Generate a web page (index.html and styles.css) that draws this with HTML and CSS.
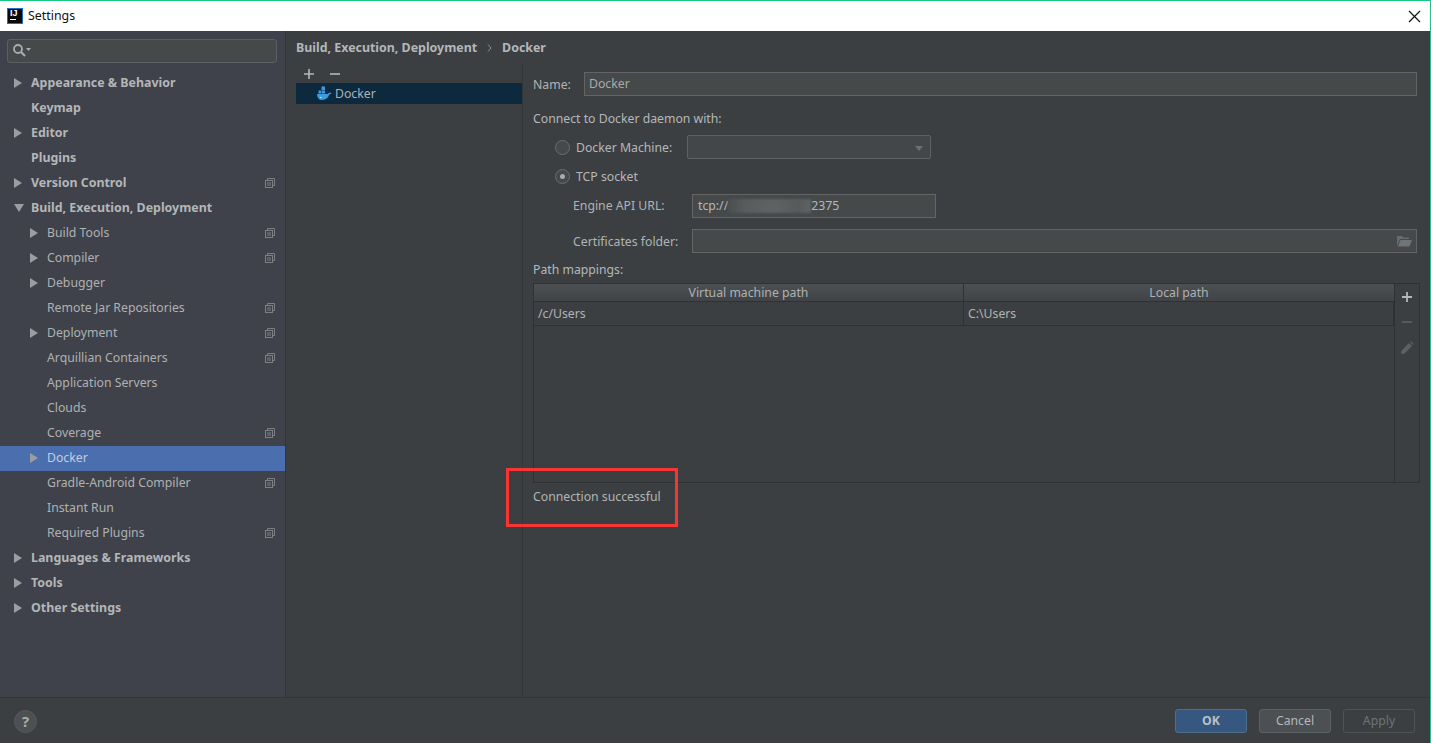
FILE: index.html
```html
<!DOCTYPE html>
<html lang="en">
<head>
<meta charset="utf-8">
<title>Settings</title>
<link rel="stylesheet" href="styles.css">
</head>
<body>
<div class="window">
  <header class="titlebar">
    <div class="app-logo"><span class="app-logo-text">IJ</span><span class="app-logo-bar"></span></div>
    <span class="title">Settings</span>
    <svg class="close" width="13" height="13" viewBox="0 0 13 13"><path d="M1 1l11 11M12 1L1 12" stroke="#111" stroke-width="1.2" fill="none"/></svg>
  </header>
  <div class="body">
    <aside class="sidebar">
      <div class="search">
        <svg width="20" height="15" viewBox="0 0 20 15"><circle cx="6" cy="6" r="4" fill="none" stroke="#a8adb0" stroke-width="1.8"/><path d="M9 9l4 4" stroke="#a8adb0" stroke-width="2.2"/><path d="M14 5h5l-2.500 3z" fill="#a8adb0"/></svg>
      </div>
      <nav class="tree">
        <div class="row bold"><i class="arrow"></i><span>Appearance &amp; Behavior</span></div>
        <div class="row bold"><i class="noarrow"></i><span>Keymap</span></div>
        <div class="row bold"><i class="arrow"></i><span>Editor</span></div>
        <div class="row bold"><i class="noarrow"></i><span>Plugins</span></div>
        <div class="row bold"><i class="arrow"></i><span>Version Control</span><svg class="copy" viewBox="0 0 10 10"><use href="#copy"/></svg></div>
        <div class="row bold"><i class="arrow down"></i><span>Build, Execution, Deployment</span></div>
        <div class="row sub"><i class="arrow"></i><span>Build Tools</span><svg class="copy" viewBox="0 0 10 10"><use href="#copy"/></svg></div>
        <div class="row sub"><i class="arrow"></i><span>Compiler</span><svg class="copy" viewBox="0 0 10 10"><use href="#copy"/></svg></div>
        <div class="row sub"><i class="arrow"></i><span>Debugger</span></div>
        <div class="row sub"><i class="noarrow"></i><span>Remote Jar Repositories</span><svg class="copy" viewBox="0 0 10 10"><use href="#copy"/></svg></div>
        <div class="row sub"><i class="arrow"></i><span>Deployment</span><svg class="copy" viewBox="0 0 10 10"><use href="#copy"/></svg></div>
        <div class="row sub"><i class="noarrow"></i><span>Arquillian Containers</span><svg class="copy" viewBox="0 0 10 10"><use href="#copy"/></svg></div>
        <div class="row sub"><i class="noarrow"></i><span>Application Servers</span></div>
        <div class="row sub"><i class="noarrow"></i><span>Clouds</span></div>
        <div class="row sub"><i class="noarrow"></i><span>Coverage</span><svg class="copy" viewBox="0 0 10 10"><use href="#copy"/></svg></div>
        <div class="row sub selected"><i class="arrow"></i><span>Docker</span></div>
        <div class="row sub"><i class="noarrow"></i><span>Gradle-Android Compiler</span><svg class="copy" viewBox="0 0 10 10"><use href="#copy"/></svg></div>
        <div class="row sub"><i class="noarrow"></i><span>Instant Run</span></div>
        <div class="row sub"><i class="noarrow"></i><span>Required Plugins</span><svg class="copy" viewBox="0 0 10 10"><use href="#copy"/></svg></div>
        <div class="row bold"><i class="arrow"></i><span>Languages &amp; Frameworks</span></div>
        <div class="row bold"><i class="arrow"></i><span>Tools</span></div>
        <div class="row bold"><i class="arrow"></i><span>Other Settings</span></div>
      </nav>
    </aside>
    <main class="content">
      <div class="crumbs"><span>Build, Execution, Deployment</span><svg class="crumb-sep" width="5" height="8" viewBox="0 0 5 8"><path d="M1 .5L4 4 1 7.500" fill="none" stroke="#8f9396"/></svg><span>Docker</span></div>
      <div class="columns">
        <section class="servers">
          <div class="servers-tools">
            <svg width="12" height="12" viewBox="0 0 12 12"><path d="M6 1v10M1 6h10" stroke="#b4b8ba" stroke-width="1.6"/></svg>
            <svg width="12" height="12" viewBox="0 0 12 12"><path d="M1 6h10" stroke="#b4b8ba" stroke-width="1.600"/></svg>
          </div>
          <div class="server-item">
            <svg width="15" height="15" viewBox="0 0 15 15"><path d="M4.500 .5h3.500v3.500H4.500zM1.500 4.500h3v3h-3zM5 4.500h3v3H5z" fill="#3d9be0"/><path d="M0 8h11c.4-1.300 1.700-1.800 3.500-.9-.5 1-1.200 1.400-2.200 1.500C11.300 12 8.800 14 5 14 2 14 .3 12 0 8z" fill="#3d9be0"/><path d="M3 11.500h1.500" stroke="#d5e6f2" stroke-width="1"/></svg>
            <span>Docker</span>
          </div>
        </section>
        <section class="form">
          <div class="name-row"><label>Name:</label><div class="field field-name">Docker</div></div>
          <div class="connect-label">Connect to Docker daemon with:</div>
          <div class="radio-row"><span class="radio"></span><span class="radio-text">Docker Machine:</span><div class="combo"><i class="combo-arrow"></i></div></div>
          <div class="radio-row tcp"><span class="radio on"></span><span class="radio-text">TCP socket</span></div>
          <div class="url-row"><label>Engine API URL:</label><div class="field field-url">tcp://<span class="blurred"></span>2375</div></div>
          <div class="cert-row"><label>Certificates folder:</label><div class="field field-cert">
            <svg width="15" height="12" viewBox="0 0 15 12"><path d="M0 1h5l1 1.500h6V4H3L0 11z" fill="#676c70"/><path d="M3.500 5H15l-2.500 6.500H.8z" fill="#6e7478"/></svg>
          </div></div>
          <div class="path-label">Path mappings:</div>
          <div class="mapping">
            <div class="table">
              <div class="thead"><div class="th th-left">Virtual machine path</div><div class="th th-right">Local path</div></div>
              <div class="tr"><div class="td td-left">/c/Users</div><div class="td td-right">C:\Users</div></div>
            </div>
            <div class="table-tools">
              <svg width="12" height="12" viewBox="0 0 12 12"><path d="M6 1v10M1 6h10" stroke="#b4b8ba" stroke-width="1.800"/></svg>
              <svg width="12" height="12" viewBox="0 0 12 12"><path d="M1 6h10" stroke="#5d6165" stroke-width="1.600"/></svg>
              <svg width="14" height="14" viewBox="0 0 14 14"><path d="M1 13l.6-3.500L9 2l3 3-7.500 7.400zM10 1l1-.6 2.600 2.600-.6 1z" fill="#5d6165"/></svg>
            </div>
          </div>
          <div class="status">Connection successful</div>
        </section>
      </div>
    </main>
  </div>
  <footer class="footer">
    <div class="help">?</div>
    <div class="buttons">
      <div class="btn btn-ok">OK</div>
      <div class="btn btn-cancel">Cancel</div>
      <div class="btn btn-apply">Apply</div>
    </div>
  </footer>
  <div class="highlight"></div>
</div>
<svg class="defs" width="0" height="0"><defs><g id="copy" fill="none" stroke="#7d8184" stroke-width="1"><path d="M2.500 2.500V.5h7v7h-2"/><rect x=".5" y="2.500" width="7" height="7"/><path d="M2 5h4M2 7h4"/></g></defs></svg>
</body>
</html>
```
FILE: styles.css
```css
* { box-sizing: border-box; }
html, body { margin: 0; height: 100%; overflow: hidden; }
body { font-family: "Noto Sans", "Open Sans", sans-serif; font-size: 12.25px; color: #b4b8ba; background: #3c3f41; }
.defs { position: absolute; }
.window { position: relative; width: 1431px; height: 743px; display: flex; flex-direction: column; border-top: 1px solid #17c77f; border-right: 1px solid #17c77f; }
.titlebar { height: 30px; flex: none; background: #fff; display: flex; align-items: center; padding: 0 9px 0 7px; color: #111; font-size: 12.4px; }
.app-logo { width: 16px; height: 16px; background: #0a0a0a; border: 1px solid #1f6fc4; position: relative; color: #fff; font-family: "Liberation Sans", sans-serif; font-size: 9px; font-weight: 700; line-height: 9px; padding-left: 2px; margin-right: 5px; }
.app-logo-text { display: block; }
.app-logo-bar { display: block; width: 6px; height: 1px; background: #fff; margin-top: 1px; }
.title { flex: 1; line-height: 18px; }
.close { flex: none; }
.body { flex: 1; display: flex; min-height: 0; }
.sidebar { width: 286px; flex: none; background: #3f424a; border-right: 1px solid #333537; padding-top: 8px; }
.search { margin: 0 8px 0 7px; height: 24px; background: #45494a; border: 1px solid #5b5f61; border-radius: 3px; padding: 3px 0 0 4px; display: flex; }
.tree { margin-top: 8px; }
.row { height: 25px; display: flex; align-items: center; padding-left: 14px; padding-right: 10px; color: #afb1b3; line-height: 18px; }
.row span { flex: 1; margin-top: -1px; }
.row.bold { font-weight: 700; font-size: 12.4px; color: #b4b6b8; }
.row.sub { padding-left: 30px; }
.row.selected { background: #4b6eaf; color: #c3cde0; }
.arrow { width: 8px; height: 10px; flex: none; margin-right: 9px; margin-top: -2px; border-left: 8px solid #9a9ea1; border-top: 5px solid transparent; border-bottom: 5px solid transparent; }
.arrow.down { width: 10px; height: 8px; margin-right: 7px; border-top: 8px solid #9a9ea1; border-left: 5px solid transparent; border-right: 5px solid transparent; border-bottom: 0; }
.noarrow { width: 8px; flex: none; margin-right: 9px; }
.copy { width: 10px; height: 10px; flex: none; margin-top: -2px; }
.content { flex: 1; min-width: 0; display: flex; flex-direction: column; }
.crumbs { height: 33px; flex: none; display: flex; align-items: center; gap: 10px; padding: 0 0 0 10px; font-weight: 700; font-size: 12.4px; color: #b4b6b8; line-height: 18px; }
.columns { flex: 1; display: flex; min-height: 0; }
.servers { width: 237px; flex: none; border-right: 1px solid #333537; padding-left: 10px; }
.servers-tools { height: 19px; display: flex; align-items: center; gap: 14px; padding-left: 7px; }
.server-item { height: 21px; background: #0d293e; display: flex; align-items: center; gap: 3px; padding-left: 21px; color: #a9b3ba; line-height: 18px; }
.form { flex: 1; min-width: 0; padding: 8px 10px 0 10px; line-height: 18px; }
label { color: #b0b3b5; }
.name-row { display: flex; align-items: center; height: 24px; }
.name-row label { width: 51px; flex: none; padding-top: 2px; }
.field { background: #45494a; border: 1px solid #646464; height: 24px; padding-left: 5px; line-height: 20px; color: #a8abad; }
.field-name { width: 833px; color: #a8abad; line-height: 22px; padding-left: 4px; }
.connect-label { margin-top: 14px; height: 18px; line-height: 18px; }
.radio-row { display: flex; align-items: center; height: 24px; padding-left: 22px; }
.connect-label + .radio-row { margin-top: 7px; }
.tcp { margin-top: 5px; }
.radio { width: 15px; height: 15px; border-radius: 50%; border: 1px solid #6a6d70; background: #45494a; flex: none; margin-right: 6px; position: relative; }
.radio.on::after { content: ""; position: absolute; left: 4px; top: 4px; width: 5px; height: 5px; border-radius: 50%; background: #a9acae; }
.radio-text { width: 111px; flex: none; padding-top: 2px; }
.combo { width: 244px; height: 24px; background: #43474a; border: 1px solid #5e6163; border-radius: 2px; position: relative; }
.combo-arrow { position: absolute; right: 7px; top: 10px; border-top: 5px solid #6c7073; border-left: 4px solid transparent; border-right: 4px solid transparent; }
.url-row { display: flex; align-items: center; height: 24px; margin-top: 6px; padding-left: 40px; }
.url-row label, .cert-row label { width: 119px; flex: none; }
.cert-row label { padding-top: 2px; }
.field-url { width: 244px; display: flex; align-items: center; color: #b4b8ba; }
.blurred { width: 83px; height: 14px; background: linear-gradient(90deg, #4a4e4f, #585c5d 20%, #5f6364 55%, #565a5b 85%, #5f6364); filter: blur(1px); }
.cert-row { display: flex; align-items: center; height: 24px; margin-top: 11px; padding-left: 40px; }
.field-cert { width: 725px; display: flex; align-items: center; justify-content: flex-end; padding-right: 4px; }
.path-label { margin-top: 8px; height: 18px; line-height: 18px; }
.mapping { display: flex; margin-top: 4px; height: 200px; width: 887px; border: 1px solid #2f3133; }
.table { width: 860px; flex: none; }
.thead { display: flex; height: 18px; background: linear-gradient(#4c5052, #414446); border-bottom: 1px solid #2f3133; }
.th { text-align: center; line-height: 17px; color: #aeb1b3; }
.th-left, .td-left { width: 430px; flex: none; border-right: 1px solid #2f3133; }
.th-right, .td-right { flex: 1; }
.tr { display: flex; height: 24px; border-bottom: 1px solid #2f3133; border-right: 1px solid #2f3133; }
.td { padding-left: 4px; line-height: 23px; color: #b0b3b5; }
.table-tools { flex: 1; border-left: 1px solid #2f3133; display: flex; flex-direction: column; align-items: center; gap: 13px; padding-top: 7px; }
.status { margin-top: 4px; height: 20px; line-height: 20px; color: #b0b5b8; }
.footer { height: 46px; flex: none; border-top: 1px solid #333537; display: flex; align-items: center; justify-content: space-between; padding: 1px 15px 0 14px; line-height: 18px; }
.help { width: 23px; height: 23px; border-radius: 50%; background: #4c5052; border: 1px solid #55595b; text-align: center; line-height: 21px; font-weight: 700; font-size: 15px; color: #a9acae; }
.buttons { display: flex; gap: 12px; }
.btn { width: 72px; height: 24px; border-radius: 3px; text-align: center; line-height: 22px; border: 1px solid #5e6163; }
.btn-ok { background: #365880; border-color: #4c708c; font-weight: 700; color: #b9c0c7; }
.btn-cancel { background: #4c5052; color: #b4b8ba; }
.btn-apply { background: #3c3f41; border-color: #505356; color: #6f7375; }
.highlight { position: absolute; left: 506px; top: 467px; width: 172px; height: 59px; border: 3px solid #f83535; pointer-events: none; }
```
